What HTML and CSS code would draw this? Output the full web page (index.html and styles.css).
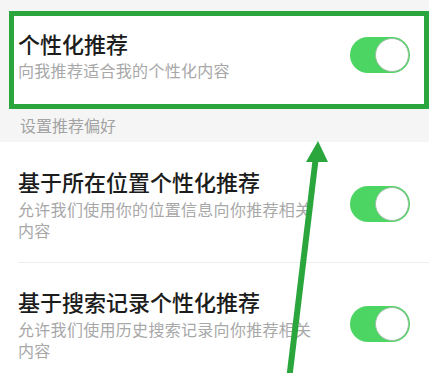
FILE: index.html
```html
<!DOCTYPE html>
<html lang="zh-CN">
<head>
<meta charset="utf-8">
<link rel="stylesheet" href="styles.css">
</head>
<body>
<div class="page">
  <div class="highlight">
    <div class="row row-top">
      <div class="text">
        <div class="title">个性化推荐</div>
        <div class="sub">向我推荐适合我的个性化内容</div>
      </div>
      <div class="toggle"><span class="knob"></span></div>
    </div>
  </div>
  <div class="section">设置推荐偏好</div>
  <div class="row row-a">
    <div class="text">
      <div class="title">基于所在位置个性化推荐</div>
      <div class="sub">允许我们使用你的位置信息向你推荐相关内容</div>
    </div>
    <div class="toggle"><span class="knob"></span></div>
  </div>
  <div class="divider"></div>
  <div class="row row-b">
    <div class="text">
      <div class="title">基于搜索记录个性化推荐</div>
      <div class="sub">允许我们使用历史搜索记录向你推荐相关内容</div>
    </div>
    <div class="toggle"><span class="knob"></span></div>
  </div>
  <svg class="arrow" width="429" height="373" viewBox="0 0 429 373">
    <line x1="289" y1="380" x2="316" y2="156" stroke="#2aa63c" stroke-width="6"/>
    <polygon points="318,141 306,162 328,162" fill="#2aa63c"/>
  </svg>
</div>
</body>
</html>
```
FILE: styles.css
```css
html, body {
  margin: 0;
  padding: 0;
}
body {
  background: #f5f5f5;
  font-family: "Noto Sans CJK SC", "Noto Sans", sans-serif;
  overflow: hidden;
}
.page {
  position: relative;
  width: 429px;
  height: 373px;
  overflow: hidden;
  padding-top: 11px;
  box-sizing: border-box;
}
.highlight {
  margin-left: 9px;
  width: 420px;
  height: 98px;
  box-sizing: border-box;
  border: 5px solid #2aa63c;
  background: #ffffff;
}
.row {
  display: flex;
  align-items: center;
  background: #ffffff;
}
.row-top {
  height: 88px;
  padding-left: 4px;
  padding-right: 14px;
  align-items: flex-start;
  box-sizing: border-box;
}
.row-top .text {
  padding-top: 13px;
}
.row-top .toggle {
  margin-top: 21px;
}
.row-top .sub {
  margin-top: 3px;
}
.row-a {
  padding: 25px 19px 21px 18px;
}
.row-b {
  padding: 24px 19px 20px 18px;
}
.text {
  flex: 0 0 300px;
}
.title {
  font-size: 22px;
  line-height: 28px;
  font-weight: 500;
  color: #1c1c1c;
}
.sub {
  margin-top: 4px;
  font-size: 16px;
  line-height: 21px;
  letter-spacing: 0.3px;
  color: #a8a8a8;
}
.toggle {
  margin-left: auto;
  width: 60px;
  height: 36px;
  border-radius: 18px;
  background: #4cd563;
  position: relative;
  flex: 0 0 60px;
}
.knob {
  position: absolute;
  right: 1px;
  top: 1px;
  width: 32px;
  height: 32px;
  border-radius: 50%;
  background: #ffffff;
  border: 1px solid #9cbfa2;
}
.section {
  height: 33px;
  line-height: 33px;
  padding-left: 20px;
  font-size: 16px;
  color: #a3a3a3;
}
.divider {
  height: 1px;
  background: #ffffff;
}
.divider::after {
  content: "";
  display: block;
  margin-left: 18px;
  height: 1px;
  background: #eeeeee;
}
.arrow {
  position: absolute;
  left: 0;
  top: 0;
  pointer-events: none;
}
```
